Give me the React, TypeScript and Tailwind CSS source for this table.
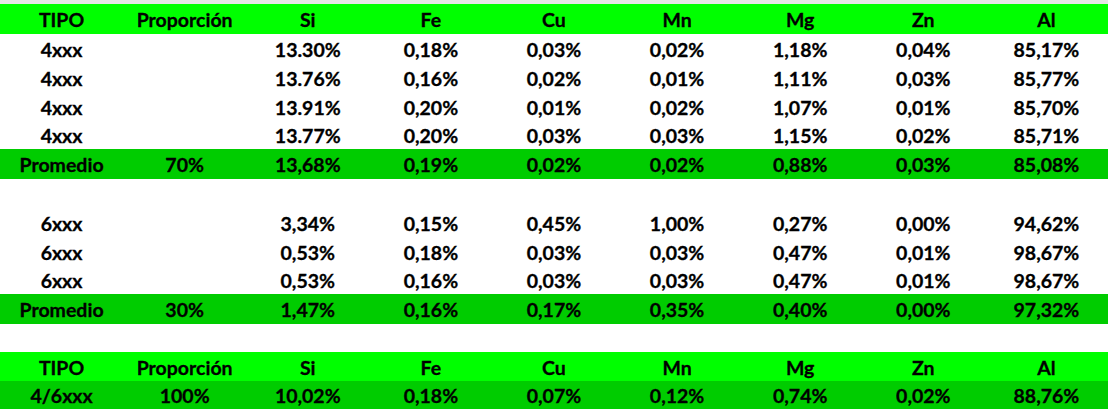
import React from "react";

type Row = {
    cells: string[];
    kind: "head" | "avg" | "data" | "blank";
    h?: string;
};

const head = ["TIPO", "Proporción", "Si", "Fe", "Cu", "Mn", "Mg", "Zn", "Al"];

const rows: Row[] = [
    { kind: "head", cells: head, h: "h-[30px]" },
    { kind: "data", cells: ["4xxx", "", "13.30%", "0,18%", "0,03%", "0,02%", "1,18%", "0,04%", "85,17%"] },
    { kind: "data", cells: ["4xxx", "", "13.76%", "0,16%", "0,02%", "0,01%", "1,11%", "0,03%", "85,77%"] },
    { kind: "data", cells: ["4xxx", "", "13.91%", "0,20%", "0,01%", "0,02%", "1,07%", "0,01%", "85,70%"] },
    { kind: "data", cells: ["4xxx", "", "13.77%", "0,20%", "0,03%", "0,03%", "1,15%", "0,02%", "85,71%"], h: "h-[28px]" },
    { kind: "avg", cells: ["Promedio", "70%", "13,68%", "0,19%", "0,02%", "0,02%", "0,88%", "0,03%", "85,08%"], h: "h-[30px]" },
    { kind: "blank", cells: [] },
    { kind: "data", cells: ["6xxx", "", "3,34%", "0,15%", "0,45%", "1,00%", "0,27%", "0,00%", "94,62%"] },
    { kind: "data", cells: ["6xxx", "", "0,53%", "0,18%", "0,03%", "0,03%", "0,47%", "0,01%", "98,67%"] },
    { kind: "data", cells: ["6xxx", "", "0,53%", "0,16%", "0,03%", "0,03%", "0,47%", "0,01%", "98,67%"], h: "h-[28px]" },
    { kind: "avg", cells: ["Promedio", "30%", "1,47%", "0,16%", "0,17%", "0,35%", "0,40%", "0,00%", "97,32%"], h: "h-[30px]" },
    { kind: "blank", cells: [], h: "h-[28px]" },
    { kind: "head", cells: head },
    { kind: "avg", cells: ["4/6xxx", "100%", "10,02%", "0,18%", "0,07%", "0,12%", "0,74%", "0,02%", "88,76%"], h: "h-[28px]" },
];

const bg = {
    head: "bg-[#00ff00]",
    avg: "bg-[#00cc00]",
    data: "bg-white",
    blank: "bg-white",
};

export default function App() {
    return (
        <div className="w-[1108px] h-[409px] overflow-hidden bg-white font-['Lato',sans-serif] font-bold text-[19.5px] text-black">
            <div className="h-[4px] bg-[#e6e6e6]" />
            {rows.map((r, i) => (
                <div key={i} className={`grid grid-cols-9 ${r.h ?? "h-[29px]"} ${bg[r.kind]}`}>
                    {r.cells.map((c, j) => (
                        <div key={j} className="flex items-center justify-center pt-[2px] leading-none [-webkit-text-stroke:0.3px_black]">
                            {c}
                        </div>
                    ))}
                </div>
            ))}
        </div>
    );
}
